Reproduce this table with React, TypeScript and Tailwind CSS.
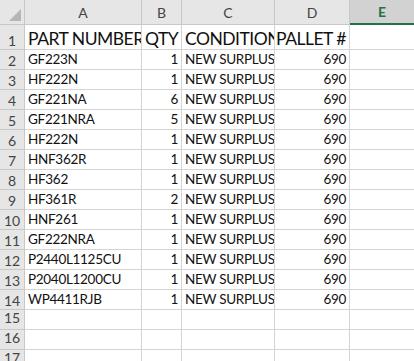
const COLS = ["A", "B", "C", "D", "E"]

const ROWS: [string, number, string, number][] = [
  ["GF223N", 1, "NEW SURPLUS", 690],
  ["HF222N", 1, "NEW SURPLUS", 690],
  ["GF221NA", 6, "NEW SURPLUS", 690],
  ["GF221NRA", 5, "NEW SURPLUS", 690],
  ["HF222N", 1, "NEW SURPLUS", 690],
  ["HNF362R", 1, "NEW SURPLUS", 690],
  ["HF362", 1, "NEW SURPLUS", 690],
  ["HF361R", 2, "NEW SURPLUS", 690],
  ["HNF261", 1, "NEW SURPLUS", 690],
  ["GF222NRA", 1, "NEW SURPLUS", 690],
  ["P2440L1125CU", 1, "NEW SURPLUS", 690],
  ["P2040L1200CU", 1, "NEW SURPLUS", 690],
  ["WP4411RJB", 1, "NEW SURPLUS", 690],
]

const cell = "shrink-0 border-r border-b border-[#d4d4d4] overflow-hidden whitespace-nowrap"

function RowNum({ n }: { n: number }) {
  return (
    <div className="w-[25px] shrink-0 border-r border-b border-[#c8c8c8] bg-[#e6e6e6] text-[#444] text-[14px] tracking-normal flex items-end justify-center pb-[1px]">
      {n}
    </div>
  )
}

export default function App() {
  return (
    <div className="w-[414px] h-[361px] overflow-hidden bg-white text-[#111]" style={{ fontFamily: "Lato, 'Liberation Sans', sans-serif" }}>
      {/* column headers */}
      <div className="flex h-[25px]">
        <div className="w-[25px] shrink-0 border-r border-b border-[#c8c8c8] bg-[#e6e6e6] relative">
          <svg className="absolute right-[3px] bottom-[3px]" width="12" height="12" viewBox="0 0 12 12">
            <polygon points="12,0 12,12 0,12" fill="#b6b6b6" />
          </svg>
        </div>
        {COLS.map((c, i) => (
          <div
            key={c}
            className={
              c === "E"
                ? "flex-1 bg-[#d2d2d2] border-b-2 border-[#217346] text-[#217346] font-bold text-[14px] flex items-center justify-center"
                : "shrink-0 border-r border-b border-[#c8c8c8] bg-[#e6e6e6] text-[#444] text-[14px] flex items-center justify-center " +
                  ["w-[117px]", "w-[40px]", "w-[93px]", "w-[75px]"][i]
            }
          >
            {c}
          </div>
        ))}
      </div>

      {/* row 1: titles */}
      <div className="flex h-[25px] text-[17.5px] tracking-[-0.5px] leading-none">
        <RowNum n={1} />
        <div className={cell + " w-[117px] pl-[3px] flex items-end pb-[2px]"}>PART NUMBER</div>
        <div className={cell + " w-[40px] pl-[3px] flex items-end pb-[2px]"}>QTY</div>
        <div className={cell + " w-[93px] pl-[3px] flex items-end pb-[2px]"}>CONDITION</div>
        <div className={cell + " w-[75px] pl-[1px] flex items-end pb-[2px]"}>PALLET #</div>
        <div className="flex-1 border-b border-[#d4d4d4]" />
      </div>

      {ROWS.map((r, i) => (
        <div key={i} className="flex h-[20px] text-[13.5px] tracking-[-0.3px] leading-none">
          <RowNum n={i + 2} />
          <div className={cell + " w-[117px] pl-[3px] flex items-end pb-[3px]"}>{r[0]}</div>
          <div className={cell + " w-[40px] pr-[3px] flex items-end justify-end pb-[3px]"}>{r[1]}</div>
          <div className={cell + " w-[93px] pl-[3px] flex items-end pb-[3px]"}>{r[2]}</div>
          <div className={cell + " w-[75px] pr-[3px] flex items-end justify-end pb-[3px]"}>{r[3]}</div>
          <div className="flex-1 border-b border-[#d4d4d4]" />
        </div>
      ))}

      {[15, 16, 17].map((n) => (
        <div key={n} className="flex h-[20px]">
          <RowNum n={n} />
          <div className={cell + " w-[117px]"} />
          <div className={cell + " w-[40px]"} />
          <div className={cell + " w-[93px]"} />
          <div className={cell + " w-[75px]"} />
          <div className="flex-1 border-b border-[#d4d4d4]" />
        </div>
      ))}
    </div>
  )
}
